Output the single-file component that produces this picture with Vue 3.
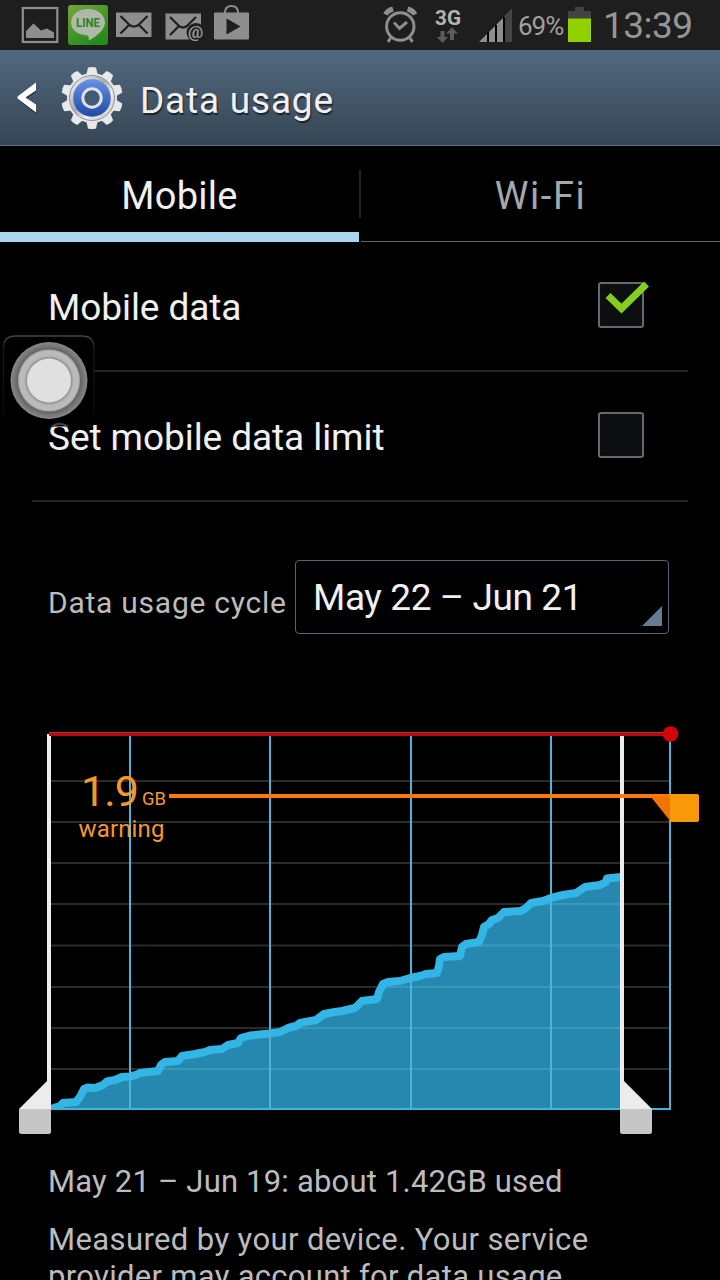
<script setup>
const cycle = 'May 22 – Jun 21'
const gridRows = [781, 822, 863, 904, 945.5, 987, 1028, 1069]
const weeks = [130, 270, 411, 551, 670]
const teeth = [0, 36, 72, 108, 144, 180, 216, 252, 288, 324]
const usage = [
  [51, 1109], [60, 1106], [63, 1103], [76, 1102], [80, 1097], [84, 1089], [88, 1087.5], [95, 1088],
  [103, 1085], [107, 1081.5], [115, 1080], [122, 1077], [130, 1076.5], [136, 1075], [140, 1073],
  [158, 1071], [161, 1065], [165, 1062], [178, 1061], [182, 1056], [195, 1054], [205, 1052],
  [210, 1050], [222, 1049], [228, 1045], [238, 1043], [241, 1038], [250, 1035.5], [270, 1033.5],
  [280, 1032], [288, 1028], [296, 1026], [300, 1023], [316, 1020], [324, 1014], [335, 1012],
  [342, 1011], [355, 1008], [362, 1001], [377, 999], [379, 992], [383, 984], [388, 982], [400, 981],
  [410, 978], [420, 976], [426, 974], [437, 973], [439, 966], [440, 959], [444, 957], [460, 956],
  [462, 947], [466, 944], [479, 942], [482, 935], [484, 927], [489, 924], [492, 920], [498, 918],
  [504, 912], [521, 911], [526, 908], [531, 903], [543, 901], [551, 898], [563, 895], [576, 893],
  [585, 887], [600, 885], [606, 882], [607, 878.5], [621, 877]
]
const line = usage.map((p) => p.join(',')).join(' ')
const area = `51,1109 ${line} 621,1109`
</script>

<template>
  <main class="screen">
    <header class="status">
      <svg class="status-left" width="260" height="50" viewBox="0 0 260 50">
        <rect x="22.800" y="8" width="34.500" height="34" fill="none" stroke="#8e8e8e" stroke-width="2.200" />
        <path d="M26 38V31L33.500 23.500L41 30.500L47 28.500L54 32.500V38Z" fill="#8e8e8e" />
        <defs>
          <linearGradient id="lineBg" x1="0" y1="0" x2=".6" y2="1">
            <stop offset="0" stop-color="#75a53a" />
            <stop offset="1" stop-color="#258b1d" />
          </linearGradient>
        </defs>
        <rect x="68" y="5" width="40" height="40" rx="3" fill="url(#lineBg)" />
        <path d="M88 9c9.700 0 17 5.800 17 13.500 0 6-6.500 13-16.500 18 .5-2.500 .5-4.500-1-5C78 35 71 30 71 22.500c0-7.700 7.300-13.500 17-13.500Z" fill="#b0b8aa" />
        <text x="88" y="27.300" class="line-label" text-anchor="middle" textLength="24" lengthAdjust="spacingAndGlyphs">LINE</text>
        <rect x="116" y="12.500" width="35.500" height="24.500" fill="#8e8e8e" />
        <path d="M120.500 16l9 9q4.500 3 9 0l9-9M120.500 33.500l8-8M147.500 33.500l-8-8" class="fold" />
        <rect x="165.500" y="13.500" width="35.500" height="26" fill="#8e8e8e" />
        <path d="M170 17l9 9q4 3 8 0l9-9M170 35l8.500-8.500" class="fold" />
        <circle cx="196" cy="32.500" r="9.500" fill="#1e1e1e" />
        <text x="195.500" y="38" class="at" text-anchor="middle">@</text>
        <rect x="214" y="12.500" width="35" height="27" rx="1" fill="#8e8e8e" />
        <path d="M225 14v-1.500q0-6.500 6.500-6.500t6.500 6.500V14" fill="none" stroke="#8e8e8e" stroke-width="2" />
        <path d="M226.500 18.500v16L240.500 26.500Z" fill="#1e1e1e" />
      </svg>
      <div class="status-right">
        <svg width="160" height="50" viewBox="376 0 160 50">
          <g fill="none" stroke="#8e8e8e" stroke-width="3">
            <circle cx="400.300" cy="26.500" r="13.700" />
            <path d="M390.500 38l-2.500 4M410 38l2.500 4M394 22.500l5.500 6 7.500-6.500" />
            <path d="M385.500 14.500q2-4 7.500-5.500M407.500 9q5.500 1.500 7.500 5.500" stroke-width="5" />
          </g>
          <text x="435" y="25" class="network" textLength="26" lengthAdjust="spacingAndGlyphs">3G</text>
          <path d="M440.500 31h4v6h3.500l-5.500 6-5.500-6h3.500Z" fill="#5c5c5c" />
          <path d="M450 40h4v-6.500h4l-6-6-6 6h4Z" fill="#5c5c5c" />
          <path d="M479 42L512 9V42Z" fill="#8e8e8e" />
          <path d="M504 17L512 9V42H504Z" fill="#444" />
          <path d="M488 32V42M496 25V42M504 17V42" stroke="#000" stroke-width="2" />
        </svg>
        <span class="percent">69%</span>
        <svg class="battery" width="24" height="50" viewBox="567 0 24 50">
          <path d="M568 11h7V7h9v4h7V42H568Z" fill="#434343" />
          <rect x="568" y="18.500" width="23" height="23.500" fill="#91d100" />
        </svg>
        <span class="clock">13:39</span>
      </div>
    </header>

    <header class="titlebar">
      <svg width="130" height="95" viewBox="0 50 130 95">
        <defs>
          <linearGradient id="steel" x1="0" y1="0" x2="1" y2="1">
            <stop offset="0" stop-color="#fff" />
            <stop offset=".45" stop-color="#aaa" />
            <stop offset=".65" stop-color="#eee" />
            <stop offset="1" stop-color="#bbb" />
          </linearGradient>
          <linearGradient id="blue" x1="0" y1="0" x2="0" y2="1">
            <stop offset="0" stop-color="#6a91e4" />
            <stop offset="1" stop-color="#1b4aa8" />
          </linearGradient>
        </defs>
        <path d="M36 84v8L25.500 99 36 106v8L18 99.500v-2Z" fill="#1d2934" />
        <path d="M36 82.500v8L25.500 97.500 36 104.500v8L17.500 98.500v-2Z" fill="#fff" />
        <g fill="#e7e8ea">
          <path v-for="a in teeth" :key="a" d="M86 76L88 67.500Q92 66.300 96 67.500L98 76Z" :transform="`rotate(${a} 92 98)`" />
          <circle cx="92" cy="98" r="25" />
        </g>
        <circle cx="92" cy="98" r="22.500" fill="url(#steel)" stroke="#8d9096" stroke-width="1" />
        <circle cx="92" cy="98" r="18.800" fill="url(#blue)" />
        <circle cx="92" cy="98" r="9.200" fill="#425b73" stroke="#dfe1e5" stroke-width="3" />
      </svg>
      <h1>Data usage</h1>
    </header>

    <nav class="tabs">
      <div class="tab active"><span>Mobile</span></div>
      <i class="tab-sep"></i>
      <div class="tab wifi"><span>Wi-Fi</span></div>
    </nav>

    <section class="settings">
      <div class="row">
        <span>Mobile data</span>
        <div class="check">
          <svg width="56" height="56" viewBox="593 276 56 56">
            <path d="M608 295.500L621.500 308.500 646.500 284" fill="none" stroke="#84cf1d" stroke-width="7" />
          </svg>
        </div>
      </div>
      <div class="row">
        <span>Set mobile data limit</span>
        <div class="check"></div>
      </div>
      <svg class="assist" width="100" height="100" viewBox="0 330 100 100">
        <defs>
          <linearGradient id="edge" x1="0" y1="0" x2="0" y2="1">
            <stop offset="0" stop-color="#444" />
            <stop offset=".15" stop-color="#181818" />
            <stop offset="1" stop-color="#080808" />
          </linearGradient>
          <radialGradient id="ring">
            <stop offset=".7" stop-color="#8b8b8b" />
            <stop offset=".8" stop-color="#b8b8b8" />
            <stop offset=".93" stop-color="#bcbcbc" />
            <stop offset="1" stop-color="#a4a4a4" />
          </radialGradient>
          <radialGradient id="outer">
            <stop offset=".78" stop-color="#5c5c5c" />
            <stop offset=".9" stop-color="#777" />
            <stop offset="1" stop-color="#888" />
          </radialGradient>
        </defs>
        <path d="M3.500 418V348Q3.500 336 15.500 336H82Q94 336 94 348V418" fill="#000" stroke="url(#edge)" stroke-width="1.500" />
        <circle cx="49" cy="380.500" r="38.500" fill="url(#outer)" />
        <circle cx="49" cy="380.500" r="31" fill="url(#ring)" />
        <circle cx="49" cy="380.500" r="22" fill="#e0e0e0" />
        <rect x="50" y="422" width="19" height="4.500" fill="#000" />
        <path d="M52 426.500Q59 421 68 426.500" fill="none" stroke="#444" stroke-width="2" />
      </svg>
    </section>

    <section class="cycle">
      <span class="cycle-label">Data usage cycle</span>
      <div class="spinner"><span>{{ cycle }}</span></div>
    </section>

    <svg class="chart" width="720" height="430" viewBox="0 720 720 430">
      <clipPath id="under"><polygon :points="area" /></clipPath>
      <clipPath id="plot"><rect x="50" y="730" width="571" height="380" /></clipPath>
      <path v-for="y in gridRows" :key="y" :d="`M51 ${y}H670`" stroke="#2b2b2b" stroke-width="2" />
      <polygon :points="area" fill="#2688ae" />
      <path v-for="y in gridRows.slice(3)" :key="'f' + y" :d="`M51 ${y}H620`" stroke="#3a98bb" stroke-width="2" clip-path="url(#under)" />
      <polyline :points="line" fill="none" stroke="#33b5e5" stroke-width="8" stroke-linejoin="round" clip-path="url(#plot)" />
      <path d="M50 1109H671" stroke="#3bb3df" stroke-width="2" />
      <path v-for="x in weeks" :key="x" :d="`M${x} 735V1110`" stroke="#4db2dc" stroke-width="2" />
      <path d="M47 734H51V1109H19L47 1081Z" fill="#ececec" />
      <path d="M19 1109H51V1131.500Q51 1134 48.500 1134H21.500Q19 1134 19 1131.500Z" fill="#c6c6c6" />
      <path d="M620 734H624V1081L652 1109H620Z" fill="#ececec" />
      <path d="M620 1109H652V1131.500Q652 1134 649.500 1134H622.500Q620 1134 620 1131.500Z" fill="#c6c6c6" />
      <path d="M49 734H670" stroke="#b50b10" stroke-width="4" />
      <path d="M49 732.500H670" stroke="#bd2a2c" stroke-width="1" />
      <circle cx="670.500" cy="734" r="7.800" fill="#d20509" />
      <path d="M169 796H672" stroke="#f97a0b" stroke-width="4" />
      <path d="M651 797H671V822Z" fill="#f47200" />
      <path d="M670 794H697Q699 794 699 796V820Q699 822 697 822H670Z" fill="#f89a08" />
      <g class="warning">
        <text x="81" y="805.500" font-size="43" textLength="58">1.9</text>
        <text x="142" y="805" font-size="18" textLength="24" lengthAdjust="spacingAndGlyphs">GB</text>
        <text x="78.500" y="837" font-size="24" textLength="86">warning</text>
      </g>
    </svg>

    <section class="notes">
      <p class="summary">May 21 – Jun 19: about 1.42GB used</p>
      <p class="note1">Measured by your device. Your service</p>
      <p class="note2">provider may account for data usage</p>
    </section>
  </main>
</template>

<style>
html, body { background: #000; overflow: hidden; }
</style>

<style scoped>
.screen { width: 720px; height: 1280px; overflow: hidden; background: #000; color: #f0f0f0; font-family: Roboto, sans-serif; }
svg { display: block; flex: none; }
.status { height: 50px; background: #1e1e1e; display: flex; justify-content: space-between; color: #969696; }
.status-right { width: 344px; display: flex; align-items: center; white-space: nowrap; }
.status-right > svg:first-child { margin-right: -18px; }
.percent { width: 49px; padding-top: 1px; font-size: 26px; letter-spacing: -1px; color: #a0a0a0; }
.clock { margin-left: 12px; font-size: 37px; font-weight: 400; letter-spacing: -0.5px; }
.line-label { font: 700 12px Roboto, sans-serif; fill: #2b8524; }
.at { font: 700 17px Roboto, sans-serif; fill: #969696; }
.fold { fill: none; stroke: #1e1e1e; stroke-width: 2.2; }
.network { font: 700 21px Roboto, sans-serif; fill: #b4b4b4; }
.titlebar { box-sizing: border-box; height: 96px; display: flex; align-items: center; background: linear-gradient(#51697f, #364554); border-bottom: 1px solid #607687; }
h1 { margin: 5px 0 0 10px; font-size: 37px; font-weight: 400; letter-spacing: 0.8px; text-shadow: 1px 2px 1px #1b232b; white-space: nowrap; }
.tabs { height: 96px; display: flex; }
.tab { flex: 1; box-sizing: border-box; display: flex; justify-content: center; align-items: center; padding-top: 5px; font-size: 38px; color: #a2a8ac; border-bottom: 1px solid #5d6a72; }
.active { color: #f0f0f0; padding-top: 14px; border-bottom: 10px solid #aad5ef; letter-spacing: .3px; }
.wifi { letter-spacing: 1.6px; }
.tab-sep { width: 2px; height: 48px; margin-top: 24px; background: #222; }
.settings { position: relative; padding: 0 32px; }
.row { box-sizing: border-box; height: 130px; padding: 0 44px 2px 16px; display: flex; align-items: center; justify-content: space-between; border-bottom: 2px solid #242424; font-size: 37px; letter-spacing: -.07px; white-space: nowrap; }
.row > span { padding-top: 4px; }
.check { box-sizing: border-box; width: 46px; height: 46px; border: 2px solid #666a6f; border-radius: 3px; background: #0c0e10; }
.check svg { margin: -8px 0 0 -7px; }
.assist { position: absolute; left: 0; top: 88px; }
.cycle { height: 218px; box-sizing: border-box; padding: 58px 0 0 48px; display: flex; align-items: flex-start; color: #bcbcbc; }
.cycle-label { width: 247px; padding-top: 25px; font-size: 30px; letter-spacing: .75px; white-space: nowrap; }
.spinner { position: relative; box-sizing: border-box; width: 374px; height: 74px; padding: 15px 17px; border: 1px solid #526575; border-radius: 4px; color: #f0f0f0; font-size: 37px; letter-spacing: -.4px; white-space: nowrap; }
.spinner::after { content: ''; position: absolute; right: 6px; bottom: 7px; width: 20px; height: 20px; background: #667b94; clip-path: polygon(100% 0, 100% 100%, 0 100%); }
.warning { fill: #f4982c; font-family: Roboto, sans-serif; }
.notes { padding: 13px 48px 0; color: #bcbcbc; font-size: 31px; white-space: nowrap; }
p { margin: 0; line-height: 37px; }
.summary { letter-spacing: .19px; }
.note1 { margin-top: 21px; letter-spacing: .39px; }
.note2 { letter-spacing: .29px; }
</style>
